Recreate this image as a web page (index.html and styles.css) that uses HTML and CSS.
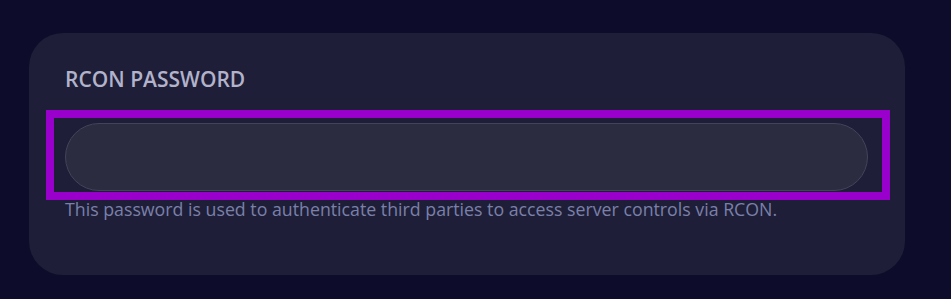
FILE: index.html
```html
<!DOCTYPE html>
<html lang="en">
<head>
  <meta charset="UTF-8" />
  <meta name="viewport" content="width=device-width, initial-scale=1.0"/>
  <title>RCON Password</title>
  <link rel="stylesheet" href="styles.css">
</head>
<body>

<!-- RCON settings card -->
<div class="card">
  <label class="field-label" for="rconPassword">RCON PASSWORD</label>
  <div class="focus-ring">
    <input type="password" id="rconPassword" class="field-input" />
  </div>
  <p class="field-help">This password is used to authenticate third parties to access server controls via RCON.</p>
</div>

</body>
</html>
```

FILE: styles.css
```css
body {
  margin: 0;
  padding: 33px 46px 24px 29px;
  background: #0d0d2b;
  font-family: 'Open Sans', 'Noto Sans', sans-serif;
}

.card {
  background: #1e1e38;
  border-radius: 34px;
  padding: 33px 15px 0 17px;
  height: 242px;
  box-sizing: border-box;
}

.field-label {
  display: block;
  margin-left: 19px;
  color: #b2b3cb;
  font-size: 21px;
  font-weight: 600;
  line-height: 27px;
}

.focus-ring {
  margin-top: 17px;
  border: 8px solid #9a00cc;
  padding: 5px 14px 1px 11px;
}

.field-input {
  display: block;
  width: 100%;
  height: 68px;
  box-sizing: border-box;
  border: 1px solid #43435b;
  border-radius: 34px;
  background: #2b2c40;
  color: #ddd;
  font-size: 18px;
  padding: 0 24px;
  outline: none;
}

.field-help {
  margin: 0 0 0 19px;
  color: #7b80a8;
  font-size: 17.75px;
  line-height: 18px;
}
```
